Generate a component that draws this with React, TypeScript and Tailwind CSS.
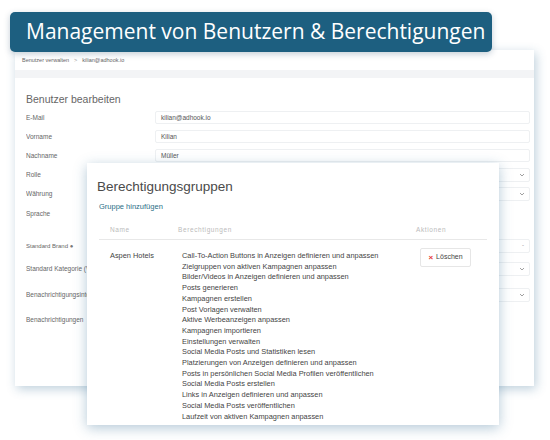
import React from "react";

const perms = [
  "Call-To-Action Buttons in Anzeigen definieren und anpassen",
  "Zielgruppen von aktiven Kampagnen anpassen",
  "Bilder/Videos in Anzeigen definieren und anpassen",
  "Posts generieren",
  "Kampagnen erstellen",
  "Post Vorlagen verwalten",
  "Aktive Werbeanzeigen anpassen",
  "Kampagnen importieren",
  "Einstellungen verwalten",
  "Social Media Posts und Statistiken lesen",
  "Platzierungen von Anzeigen definieren und anpassen",
  "Posts in persönlichen Social Media Profilen veröffentlichen",
  "Social Media Posts erstellen",
  "Links in Anzeigen definieren und anpassen",
  "Social Media Posts veröffentlichen",
  "Laufzeit von aktiven Kampagnen anpassen",
];

function Chevron() {
  return (
    <svg width="6" height="4" viewBox="0 0 6 4" className="mr-[4px]">
      <path d="M1 1 L3 3 L5 1" stroke="#888" strokeWidth="0.8" fill="none" />
    </svg>
  );
}

function Row({
  label,
  h,
  value,
  kind,
}: {
  label: React.ReactNode;
  h: string;
  value?: string;
  kind?: "input" | "select" | "dash" | "none";
}) {
  return (
    <div className={`flex items-center ${h}`}>
      <div className="w-[129px] text-[6.5px] text-[#666] whitespace-nowrap overflow-hidden">{label}</div>
      {kind === "input" && (
        <div className="flex-1 h-[13px] border border-[#eef0f2] rounded-[2px] flex items-center pl-[5px] text-[6.5px] text-[#555]">
          {value}
        </div>
      )}
      {kind === "select" && (
        <div className="flex-1 h-[14px] border border-[#eef0f2] rounded-[2px] flex items-center justify-end">
          <Chevron />
        </div>
      )}
      {kind === "dash" && (
        <div className="flex-1 h-[14px] border border-[#eef0f2] rounded-[2px] flex items-center justify-end pr-[5px] text-[6px] text-[#888]">
          -
        </div>
      )}
    </div>
  );
}

export default function App() {
  return (
    <div className="relative w-[550px] h-[440px] bg-white overflow-hidden font-['Liberation_Sans',Arial,sans-serif]">
      <div className="relative z-10 ml-[10px] mt-[12px] w-[482px] h-[40px] rounded-[5px] bg-[#1d5f80] flex items-center pl-[16px] text-white text-[21px] font-['Open_Sans',sans-serif] shadow-[0_2px_6px_rgba(20,60,90,0.25)]">
        Management von Benutzern &amp; Berechtigungen
      </div>

      <div className="ml-[15px] -mt-[2px] w-[519px] h-[336px] bg-white shadow-[2px_3px_10px_rgba(40,100,140,0.3)]">
        <div className="h-[20px] flex items-center pl-[7px] text-[5.5px] text-[#666] gap-[5px]">
          <span>Benutzer verwalten</span>
          <span className="text-[#999]">&gt;</span>
          <span>kilian@adhook.io</span>
        </div>
        <div className="h-[8px] bg-[#f3f4f6]" />
        <div className="pl-[11px] pr-[4px]">
          <div className="mt-[12px] h-[20px] flex items-center text-[10.5px] text-[#666]">
            Benutzer bearbeiten
          </div>
          <div className="-mt-[2px]">
            <Row label="E-Mail" h="h-[19px]" kind="input" value="kilian@adhook.io" />
            <Row label="Vorname" h="h-[19px]" kind="input" value="Kilian" />
            <Row label="Nachname" h="h-[19px]" kind="input" value="Müller" />
            <Row label="Rolle" h="h-[19px]" kind="select" />
            <Row label="Währung" h="h-[20px]" kind="select" />
            <Row label="Sprache" h="h-[20px]" kind="none" />
            <div className="h-[11px]" />
            <Row
              label={
                <span className="text-[6px]">
                  Standard Brand <span className="text-[#777]">●</span>
                </span>
              }
              h="h-[21px]"
              kind="dash"
            />
            <Row label="Standard Kategorie (Vorlagen)" h="h-[26px]" kind="select" />
            <Row label="Benachrichtigungsintervall" h="h-[26px]" kind="select" />
            <Row label="Benachrichtigungen" h="h-[24px]" kind="none" />
          </div>
        </div>
      </div>

      <div className="absolute left-[87px] top-[163px] w-[412px] h-[262px] bg-white shadow-[0_3px_12px_rgba(40,100,140,0.35)] pl-[12px] pr-[12px]">
        <div className="mt-[14px] text-[13.5px] text-[#4a4a4a] leading-[20px] -ml-[2px]">
          Berechtigungsgruppen
        </div>
        <div className="mt-[4px] text-[7.5px] text-[#2b6f87] leading-[12px]">Gruppe hinzufügen</div>
        <div className="mt-[7px] h-[20px] flex items-center text-[6.5px] text-[#bbbbbb] tracking-[0.6px] border-b border-[#e8e8e8] pl-[11px]">
          <span className="w-[68px]">Name</span>
          <span className="w-[238px]">Berechtigungen</span>
          <span>Aktionen</span>
        </div>
        <div className="flex pt-[11px] pl-[11px] text-[7.4px] text-[#444]">
          <div className="w-[72px] leading-[10.7px]">Aspen Hotels</div>
          <div className="w-[238px]">
            {perms.map((p) => (
              <div key={p} className="leading-[10.7px] whitespace-nowrap">
                {p}
              </div>
            ))}
          </div>
          <div className="-mt-[3px]">
            <div className="w-[51px] h-[19px] border border-[#e6e6e6] rounded-[2px] flex items-center justify-center gap-[3px] text-[7px] text-[#444]">
              <span className="text-[#e53935] text-[8px] font-bold leading-none">×</span>
              <span>Löschen</span>
            </div>
          </div>
        </div>
      </div>
    </div>
  );
}
